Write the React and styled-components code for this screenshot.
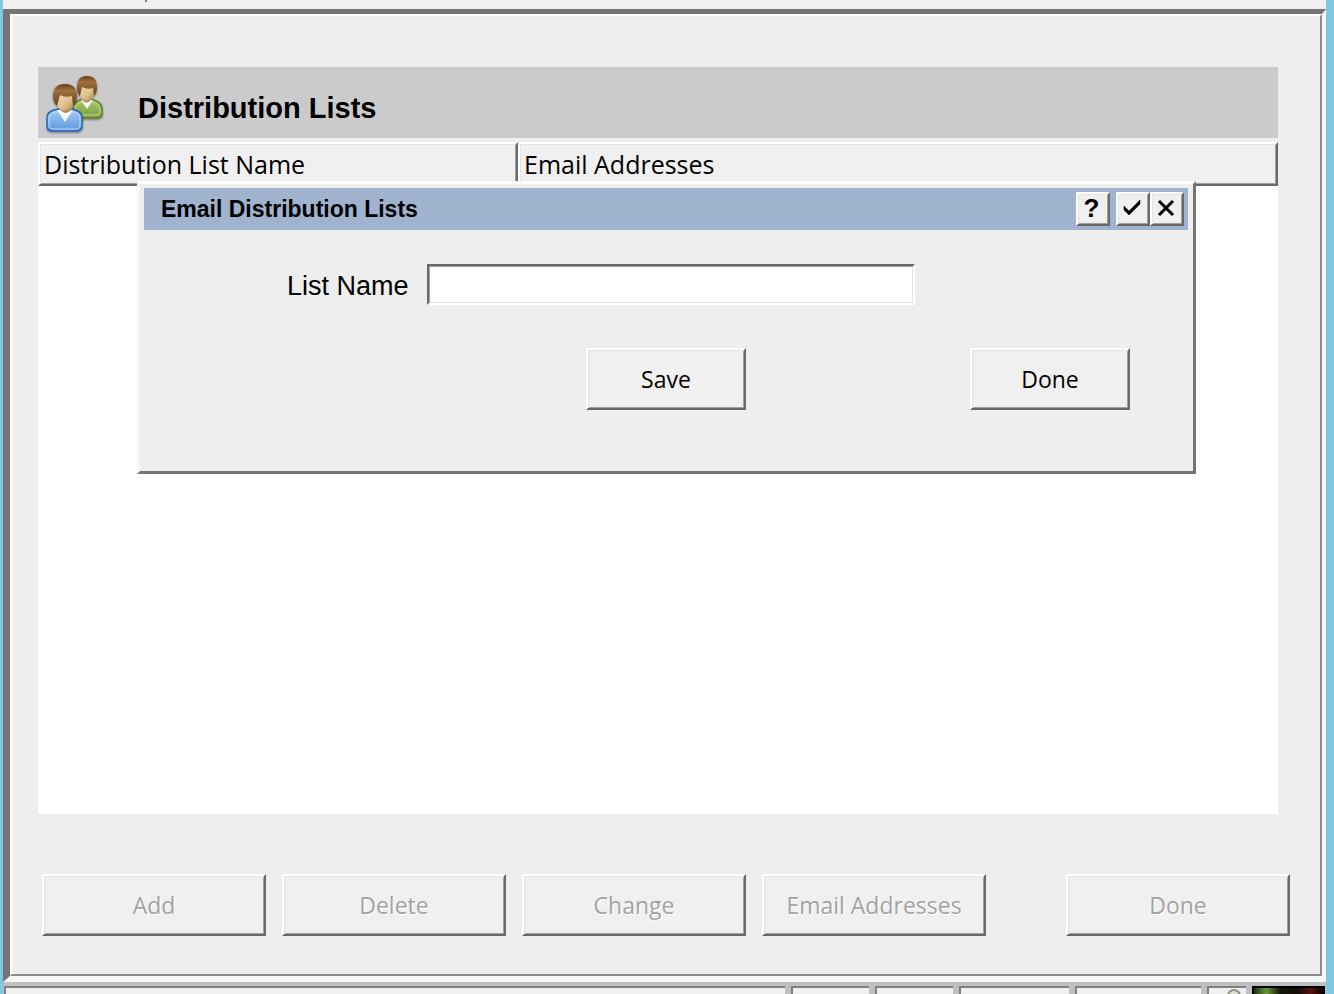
import styled, { createGlobalStyle } from "styled-components";
import { useState } from "react";

const GlobalStyle = createGlobalStyle`
  * {
    box-sizing: border-box;
  }
  body {
    margin: 0;
    background: #7ec8e6;
    font-family: "Open Sans", "Noto Sans", sans-serif;
    color: #000;
  }
`;

const Window = styled.div`
  min-height: 100vh;
  margin: 0 8px 0 3px;
  background: #f0f0f0;
  display: flex;
  flex-direction: column;
`;
const TopStrip = styled.div`
  height: 9px;
  padding-left: 142px;
`;
const TopTick = styled.div`
  width: 2px;
  height: 2px;
  background: #808080;
`;
const Frame = styled.div`
  flex: 1;
  display: flex;
  border-style: solid;
  border-width: 5px 4px 6px 7px;
  border-color: #757575 #f7f7f7 #f7f7f7 #757575;
`;
const Panel = styled.main`
  flex: 1;
  display: flex;
  flex-direction: column;
  border: 2px solid;
  border-color: #fff #8c8c8c #8c8c8c #fff;
  background: #eee;
  padding: 51px 0 38px;
`;
const ListArea = styled.section`
  flex: 1;
  display: flex;
  flex-direction: column;
  position: relative;
  margin: 0 42px 60px 26px;
  background: #fff;
`;
const ListHeader = styled.header`
  height: 71px;
  padding: 10px 8px 6px;
  display: flex;
  align-items: center;
  gap: 32px;
  background: #cbcbcb;
`;
const ListTitle = styled.h1`
  margin: 8px 0 0;
  font: bold 29px "Liberation Sans", sans-serif;
`;
const TableArea = styled.div`
  border-top: 4px solid #eee;
`;
const Table = styled.table`
  width: 100%;
  table-layout: fixed;
  border-collapse: separate;
  border-spacing: 0;
`;
const HeadCell = styled.th`
  width: ${(props) => props.width || "auto"};
  height: 44px;
  padding: 0 4px;
  border: 2px solid;
  border-color: #fff #696969 #696969 #fff;
  box-shadow: inset 1px 1px #e3e3e3, inset -1px -1px #a0a0a0;
  background: #f0f0f0;
  font-size: 25px;
  font-weight: normal;
  line-height: 36px;
  text-align: left;
`;

const Button = styled.button`
  width: ${(props) => (props.$wide ? "224px" : "160px")};
  height: 62px;
  padding: 0;
  border: 2px solid;
  border-color: #fff #696969 #696969 #fff;
  box-shadow: inset 1px 1px #e3e3e3, inset -1px -1px #a0a0a0;
  background: #f0f0f0;
  font-family: inherit;
  font-size: 23px;
  color: #000;
  &:disabled {
    color: #a3a3a3;
    text-shadow: 1px 1px #fff;
  }
`;
const Footer = styled.footer`
  display: flex;
  gap: 16px;
  padding: 0 30px;
  & > :last-child {
    margin-left: auto;
  }
`;

const Dialog = styled.form`
  position: absolute;
  top: 114px;
  left: 99px;
  right: 82px;
  padding: 4px 5px 61px 4px;
  border: 3px solid;
  border-color: #fff #757575 #757575 #f8f8f8;
  background: #eee;
`;
const TitleBar = styled.div`
  height: 42px;
  padding: 0 4px 0 17px;
  display: flex;
  align-items: center;
  background: #9fb3cf;
`;
const DialogTitle = styled.h2`
  margin: 0 auto 0 0;
  font: bold 23px "Liberation Sans", sans-serif;
`;
const TitleButton = styled.button`
  width: 34px;
  height: 34px;
  padding: 0 3px 2px 0;
  margin-right: ${(props) => (props.$spaced ? "6px" : "0")};
  display: flex;
  align-items: center;
  justify-content: center;
  border: 2px solid;
  border-color: #fff #696969 #696969 #fff;
  box-shadow: inset 1px 1px #e3e3e3, inset -1px -1px #a0a0a0;
  background: #f0f0f0;
  color: #000;
  font: bold 26px "Liberation Sans", sans-serif;
  line-height: 26px;
`;
const Field = styled.div`
  display: flex;
  align-items: center;
  gap: 18px;
  margin: 34px 0 43px 143px;
`;
const Label = styled.label`
  padding-top: 4px;
  font: 27px "Liberation Sans", sans-serif;
`;
const TextInput = styled.input`
  width: 488px;
  height: 41px;
  padding: 0 6px;
  border: 2px solid;
  border-color: #696969 #fff #fff #696969;
  box-shadow: inset 1px 1px #a0a0a0, inset -1px -1px #e3e3e3;
  outline: none;
  background: #fff;
  font: 26px "Liberation Sans", sans-serif;
`;
const Actions = styled.div`
  display: flex;
  justify-content: flex-end;
  gap: 224px;
  padding-right: 58px;
`;

const StatusBar = styled.div`
  height: 12px;
  padding: 4px 1px 0;
  display: flex;
  gap: 6px;
  background: #c0c0c0;
`;
const StatusCell = styled.div`
  flex: ${(props) => (props.$width ? `0 0 ${props.$width}px` : "1")};
  border-top: 2px solid #808080;
  border-left: 2px solid #808080;
  background: #f0f0f0;
  overflow: hidden;
  display: flex;
  justify-content: flex-end;
`;
const StatusPicture = styled.div`
  width: 73px;
  border: 2px solid #000;
  border-bottom: none;
  background: linear-gradient(90deg, #20300c, #6d9638 18%, #12170a 38%, #160b07 65%, #5a100f 82%, #080505);
`;

const PeopleIcon = () => (
  <svg width="60" height="60" viewBox="0 0 60 60" aria-hidden="true">
    <defs>
      <linearGradient id="hair" x1="0" y1="0" x2="0" y2="1">
        <stop offset="0" stopColor="#6b4019" />
        <stop offset=".3" stopColor="#a0703f" />
        <stop offset="1" stopColor="#66401c" />
      </linearGradient>
      <linearGradient id="skin" x1="0" y1="0" x2="1" y2="1">
        <stop offset="0" stopColor="#eed6a8" />
        <stop offset=".55" stopColor="#dfc18c" />
        <stop offset="1" stopColor="#a5804c" />
      </linearGradient>
      <linearGradient id="blue" x1="0" y1="0" x2="0" y2="1">
        <stop offset="0" stopColor="#a6cdf7" />
        <stop offset="1" stopColor="#5b98df" />
      </linearGradient>
      <linearGradient id="green" x1="0" y1="0" x2="0" y2="1">
        <stop offset="0" stopColor="#a9cc71" />
        <stop offset="1" stopColor="#789f40" />
      </linearGradient>
      <filter id="shade" x="-20%" y="-20%" width="140%" height="150%">
        <feDropShadow dx="0" dy="1" stdDeviation="1" floodOpacity=".45" />
      </filter>
    </defs>
    <g filter="url(#shade)">
      <path d="M27 42V34q0-7 7-9l4-1h7l5 2q6 2 6 9v4q0 4-5 4H31z" fill="url(#green)" stroke="#61832c" strokeWidth="1.5" />
      <path d="M29 40V35q0-6 6-8h13q6 2 6 8v3q0 2-4 2z" fill="none" stroke="#bfdb94" strokeWidth="1" />
      <path d="M35 25l6 9 6-9z" fill="#f5f5f5" />
      <path d="M36 19h9v6q-4 5-9 0z" fill="#b08a50" />
      <path d="M34 12h14v8q-1 5-7 6-6-1-7-6z" fill="url(#skin)" />
      <path d="M34 21Q31 18 31 12 31 1 41 1t10 11q0 6-3 9l-1-8q-6 2-11-1z" fill="url(#hair)" />
    </g>
    <g filter="url(#shade)">
      <path d="M1 51v-8q0-6 7-8l5-1h11l5 1q7 2 7 8v8q0 5-6 5H7q-6 0-6-5z" fill="url(#blue)" stroke="#2b65b8" strokeWidth="1.5" />
      <path d="M3 50v-6q0-5 6-7h19q6 2 6 7v6q0 4-5 4H8q-5 0-5-4z" fill="none" stroke="#b9d9fa" strokeWidth="1" />
      <path d="M11 35l8 12 8-12z" fill="#f7f7f7" />
      <path d="M14 28h11v7q-5 6-11 0z" fill="#b08a50" />
      <path d="M11 20h17v9q-1 6-9 7-7-1-8-7z" fill="url(#skin)" />
      <path d="M11 31Q7 27 7 21 7 9 19 9t12 12q0 6-4 10l-1-10q-7 2-12-1z" fill="url(#hair)" />
    </g>
  </svg>
);
const CheckIcon = () => (
  <svg width="18" height="18" viewBox="0 0 18 18" aria-hidden="true">
    <path d="M1 7v4l5 5L17 5V1L6 12z" fill="#000" stroke="#000" strokeWidth=".5" />
  </svg>
);
const CloseIcon = () => (
  <svg width="18" height="18" viewBox="0 0 18 18" aria-hidden="true">
    <path d="M2 2l14 14M16 2L2 16" fill="none" stroke="#000" strokeWidth="3" />
  </svg>
);

const footerButtons = ["Add", "Delete", "Change", "Email Addresses", "Done"];
const statusCells = [0, 78, 78, 110, 126, 39];

export default function App() {
  const [listName, setListName] = useState("");

  return (
    <>
      <GlobalStyle />
      <Window>
        <TopStrip>
          <TopTick />
        </TopStrip>
        <Frame>
          <Panel>
            <ListArea>
              <ListHeader>
                <PeopleIcon />
                <ListTitle>Distribution Lists</ListTitle>
              </ListHeader>
              <TableArea>
                <Table>
                  <thead>
                    <tr>
                      <HeadCell width="480px">Distribution List Name</HeadCell>
                      <HeadCell>Email Addresses</HeadCell>
                    </tr>
                  </thead>
                </Table>
              </TableArea>
              <Dialog onSubmit={(e) => e.preventDefault()}>
                <TitleBar>
                  <DialogTitle>Email Distribution Lists</DialogTitle>
                  <TitleButton type="button" $spaced>
                    ?
                  </TitleButton>
                  <TitleButton type="submit" aria-label="Save">
                    <CheckIcon />
                  </TitleButton>
                  <TitleButton type="button" aria-label="Close">
                    <CloseIcon />
                  </TitleButton>
                </TitleBar>
                <Field>
                  <Label htmlFor="listName">List Name</Label>
                  <TextInput
                    id="listName"
                    value={listName}
                    onChange={(e) => setListName(e.target.value)}
                  />
                </Field>
                <Actions>
                  <Button type="submit">Save</Button>
                  <Button type="button">Done</Button>
                </Actions>
              </Dialog>
            </ListArea>
            <Footer>
              {footerButtons.map((text) => (
                <Button key={text} $wide disabled>
                  {text}
                </Button>
              ))}
            </Footer>
          </Panel>
        </Frame>
        <StatusBar>
          {statusCells.map((width, i) => (
            <StatusCell key={i} $width={width}>
              {i === statusCells.length - 1 && (
                <svg width="20" height="8" viewBox="0 0 20 8" aria-hidden="true">
                  <circle cx="8" cy="8" r="6" fill="#dfe5d5" stroke="#8b9382" strokeWidth="2" />
                </svg>
              )}
            </StatusCell>
          ))}
          <StatusPicture />
        </StatusBar>
      </Window>
    </>
  );
}
